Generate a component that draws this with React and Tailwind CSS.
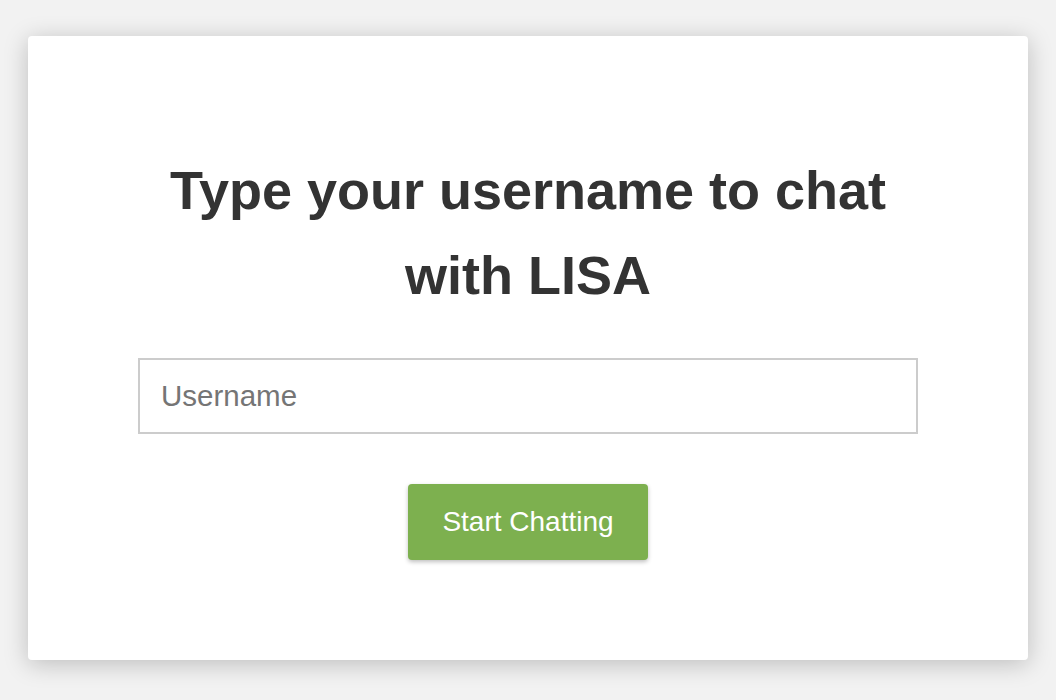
export default function App() {
  return (
    <div className="min-h-[700px] bg-[#f2f2f2] pt-[36px] font-['Liberation_Sans',Arial,sans-serif]">
      <div className="mx-auto flex h-[624px] w-[1000px] flex-col items-center rounded-[4px] bg-white pt-[112px] shadow-[0_4px_24px_rgba(0,0,0,0.22)]">
        <h1 className="w-[780px] text-center text-[54px] font-bold leading-[85px] text-[#333333]">
          Type your username to chat with LISA
        </h1>
        <input
          type="text"
          placeholder="Username"
          className="mt-[40px] h-[76px] w-[780px] border-2 border-[#cccccc] px-[21px] text-[29.5px] text-[#333333] outline-none placeholder:text-[#757575]"
        />
        <button
          type="button"
          className="mt-[50px] h-[76px] w-[240px] rounded-[4px] bg-[#7db04f] text-[28px] text-white shadow-[0_2px_4px_rgba(0,0,0,0.25)]"
        >
          Start Chatting
        </button>
      </div>
    </div>
  );
}
